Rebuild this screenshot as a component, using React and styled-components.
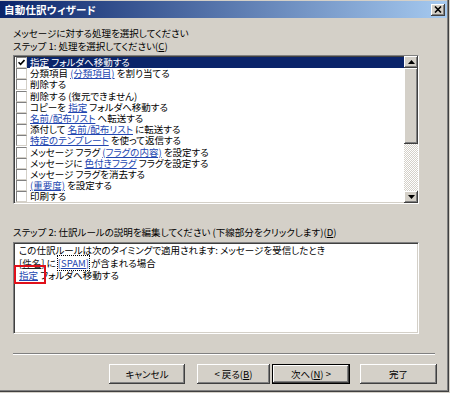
import React from 'react';
import styled, { createGlobalStyle } from 'styled-components';

const GlobalStyle = createGlobalStyle`
  html, body {
    margin: 0;
    padding: 0;
    background: #404040;
  }
  body {
    font-family: "Noto Sans CJK JP", "Liberation Sans", sans-serif;
  }
`;

const Window = styled.div`
  width: 450px;
  height: 393px;
  box-sizing: border-box;
  background: #d4d0c8;
  box-shadow: inset -1px -1px #d4d0c8, inset -2px -2px #404040, inset -3px -3px #808080;
  display: flex;
  flex-direction: column;
  font-size: 9.5px;
  color: #000;
  font-feature-settings: "palt" 1;
  overflow: hidden;
`;

const TitleBar = styled.div`
  margin-top: 1px;
  margin-right: 3px;
  height: 17px;
  display: flex;
  align-items: center;
  justify-content: space-between;
  padding: 0 2px 0 4px;
  background: linear-gradient(to right, #0a246a, #a6caf0);
`;

const Title = styled.span`
  color: #fff;
  font-weight: bold;
  font-size: 10.5px;
  letter-spacing: 0.2px;
`;

const CloseButton = styled.div`
  width: 14px;
  height: 12px;
  box-sizing: border-box;
  background: #d4d0c8;
  box-shadow: inset -1px -1px #404040, inset 1px 1px #fff, inset -2px -2px #808080;
  display: flex;
  align-items: center;
  justify-content: center;
`;

const Body = styled.div`
  padding: 9px 0 0 13px;
  width: 406px;
  display: flex;
  flex-direction: column;
`;

const Label = styled.div`
  line-height: 13px;
  height: 13px;
  white-space: nowrap;
`;

const Sunken = styled.div`
  box-sizing: border-box;
  background: #fff;
  border-top: 1px solid #808080;
  border-left: 1px solid #808080;
  border-right: 1px solid #fff;
  border-bottom: 1px solid #fff;
  box-shadow: inset 1px 1px #404040, inset -1px -1px #d4d0c8;
  padding: 1px;
`;

const ListBox = styled(Sunken)`
  margin-top: 2px;
  height: 149px;
  display: flex;
  overflow: hidden;
`;

const Rows = styled.div`
  flex: 1;
  overflow: hidden;
  padding-left: 1px;
`;

const Row = styled.div`
  height: 11.2px;
  display: flex;
  align-items: center;
  white-space: nowrap;
  line-height: 11px;
  background: ${p => (p.selected ? '#0a246a' : 'transparent')};
  color: ${p => (p.selected ? '#fff' : '#000')};
`;

const Check = styled.span`
  width: 11px;
  height: 11px;
  box-sizing: border-box;
  background: #fff;
  border-top: 1px solid #808080;
  border-left: 1px solid #808080;
  border-right: 1px solid #d4d0c8;
  border-bottom: 1px solid #d4d0c8;
  margin: 0 3px 0 0;
  flex: none;
  display: flex;
  align-items: center;
  justify-content: center;
`;

const Link = styled.span`
  color: ${p => (p.light ? '#fff' : '#2246b0')};
  text-decoration: underline;
  text-underline-offset: 1px;
`;

const Scrollbar = styled.div`
  width: 14px;
  margin: -1px -1px -1px 0;
  display: flex;
  flex-direction: column;
  background-color: #eceae6;
  background-image: repeating-conic-gradient(#d4d0c8 0 25%, #fff 0 50%);
  background-size: 2px 2px;
`;

const ScrollPart = styled.div`
  height: ${p => p.h}px;
  flex: none;
  box-sizing: border-box;
  background: #d4d0c8;
  box-shadow: inset -1px -1px #404040, inset 1px 1px #fff, inset -2px -2px #808080;
  display: flex;
  align-items: center;
  justify-content: center;
`;

const Step2Label = styled(Label)`
  margin-top: 22px;
`;

const RuleBox = styled(Sunken)`
  margin-top: 3px;
  height: 92px;
  padding: 1px 5px;
`;

const RuleLine = styled.div`
  line-height: 12.5px;
  white-space: nowrap;
`;

const Field = styled.span`
  color: #222;
  text-decoration: underline;
`;

const FocusLink = styled(Link)`
  outline: 1px dotted #000;
  outline-offset: 0;
`;

const Marked = styled.span`
  position: relative;
`;

const RedBox = styled.span`
  position: absolute;
  left: -5px;
  top: -3px;
  width: 32px;
  height: 19px;
  box-sizing: border-box;
  border: 2px solid #e0101a;
`;

const Separator = styled.div`
  margin: 19px 0 0 13px;
  width: 422px;
  height: 0;
  border-top: 1px solid #808080;
  border-bottom: 1px solid #fff;
`;

const ButtonRow = styled.div`
  margin-top: 9px;
  display: flex;
  justify-content: flex-end;
  padding-right: 13px;
`;

const Button = styled.div`
  width: ${p => p.w}px;
  height: 20px;
  margin-left: ${p => p.gap}px;
  box-sizing: border-box;
  background: #d4d0c8;
  display: flex;
  align-items: center;
  justify-content: center;
  white-space: nowrap;
  border: ${p => (p.primary ? '1px solid #000' : 'none')};
  box-shadow: inset -1px -1px #404040, inset 1px 1px #fff, inset -2px -2px #808080;
`;

const items = [
  [{ link: '指定' }, ' フォルダへ移動する'],
  ['分類項目 ', { link: '(分類項目)' }, ' を割り当てる'],
  ['削除する'],
  ['削除する (復元できません)'],
  ['コピーを ', { link: '指定' }, ' フォルダへ移動する'],
  [{ link: '名前/配布リスト' }, ' へ転送する'],
  ['添付して ', { link: '名前/配布リスト' }, ' に転送する'],
  [{ link: '特定のテンプレート' }, ' を使って返信する'],
  ['メッセージ フラグ ', { link: '(フラグの内容)' }, ' を設定する'],
  ['メッセージに ', { link: '色付きフラグ' }, ' フラグを設定する'],
  ['メッセージ フラグを消去する'],
  [{ link: '(重要度)' }, ' を設定する'],
  ['印刷する'],
];

function CheckMark() {
  return (
    <svg width="7" height="7" viewBox="0 0 7 7">
      <path d="M0.5 3.2 L2.6 5.4 L6.5 1" fill="none" stroke="#000" strokeWidth="1.6" />
    </svg>
  );
}

function Arrow({ down }) {
  return (
    <svg width="7" height="4" viewBox="0 0 7 4">
      <path d={down ? 'M0 0 H7 L3.5 4 Z' : 'M0 4 H7 L3.5 0 Z'} fill="#000" />
    </svg>
  );
}

export default function App() {
  return (
    <Window>
      <GlobalStyle />
      <TitleBar>
        <Title>自動仕訳ウィザード</Title>
        <CloseButton>
          <svg width="8" height="7" viewBox="0 0 8 7">
            <path d="M1 0.5 L7 6.5 M7 0.5 L1 6.5" stroke="#000" strokeWidth="1.6" />
          </svg>
        </CloseButton>
      </TitleBar>
      <Body>
        <Label>メッセージに対する処理を選択してください</Label>
        <Label>ステップ 1: 処理を選択してください(<u>C</u>)</Label>
        <ListBox>
          <Rows>
            {items.map((segs, i) => (
              <Row key={i} selected={i === 0}>
                <Check>{i === 0 && <CheckMark />}</Check>
                <span>
                  {segs.map((s, j) =>
                    typeof s === 'string' ? (
                      <span key={j}>{s}</span>
                    ) : (
                      <Link key={j} light={i === 0}>{s.link}</Link>
                    )
                  )}
                </span>
              </Row>
            ))}
          </Rows>
          <Scrollbar>
            <ScrollPart h={12}><Arrow /></ScrollPart>
            <ScrollPart h={76} />
            <div style={{ flex: 1 }} />
            <ScrollPart h={12}><Arrow down /></ScrollPart>
          </Scrollbar>
        </ListBox>
        <Step2Label>ステップ 2: 仕訳ルールの説明を編集してください (下線部分をクリックします)(<u>D</u>)</Step2Label>
        <RuleBox>
          <RuleLine>この仕訳ルールは次のタイミングで適用されます: メッセージを受信したとき</RuleLine>
          <RuleLine>
            [<Field>件名</Field>] に <FocusLink>[SPAM]</FocusLink> が含まれる場合
          </RuleLine>
          <RuleLine>
            <Marked>
              <Link>指定</Link>
              <RedBox />
            </Marked>{' '}
            フォルダへ移動する
          </RuleLine>
        </RuleBox>
      </Body>
      <Separator />
      <ButtonRow>
        <Button w={76} gap={0}>キャンセル</Button>
        <Button w={73} gap={12}>&lt; 戻る(<u>B</u>)</Button>
        <Button w={78} gap={2} primary>次へ(<u>N</u>) &gt;</Button>
        <Button w={77} gap={10}>完了</Button>
      </ButtonRow>
    </Window>
  );
}
